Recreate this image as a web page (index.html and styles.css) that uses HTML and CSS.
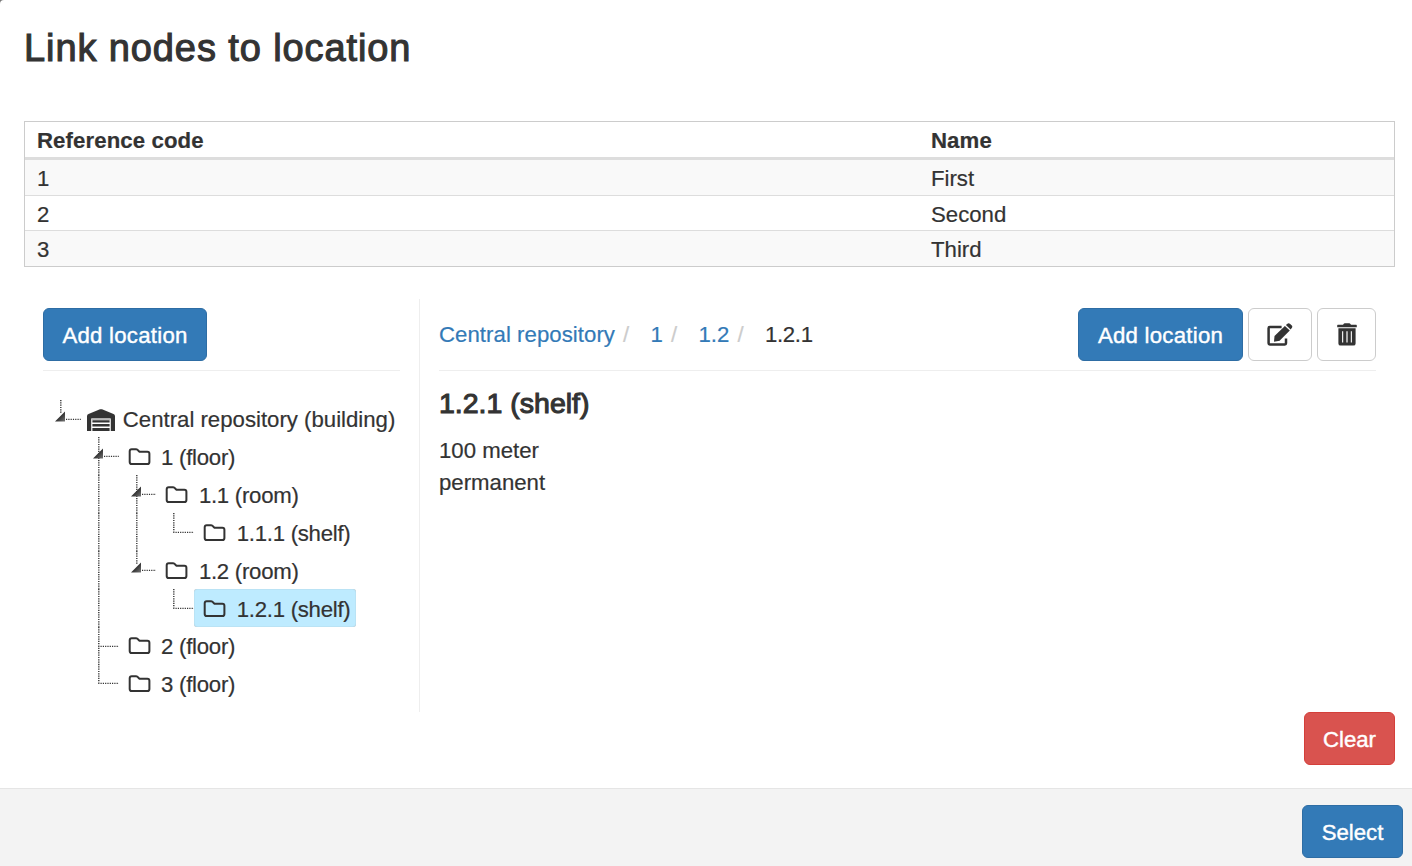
FILE: index.html
```html
<!DOCTYPE html>
<html lang="en">
<head>
<meta charset="utf-8">
<title>Link nodes to location</title>
<link rel="stylesheet" href="styles.css">
</head>
<body>
<svg width="0" height="0" class="defs">
  <defs>
    <linearGradient id="tri" x1="0" y1="0" x2="1" y2="1"><stop offset=".4" stop-color="#222"/><stop offset="1" stop-color="#777"/></linearGradient>
    <symbol id="i-folder" viewBox="0 0 22 18"><path d="M1.2 3.2Q1.2 1.2 3.2 1.2H7.4Q8.4 1.2 9.1 1.9L10.4 3.2Q11 3.8 12 3.8H18.9Q20.9 3.8 20.9 5.8V14Q20.9 16.1 18.9 16.1H3.2Q1.2 16.1 1.2 14Z" fill="none" stroke="#333" stroke-width="2"/></symbol>
    <symbol id="c-open"><path d="M17.8 0V13M23 19.4H38" class="dots"/><path d="M12 21.5L22 11.5V21.5Z" fill="url(#tri)"/></symbol>
    <symbol id="c-open-line"><path d="M17.8 0V38M23 19.4H38" class="dots"/><path d="M12 21.5L22 11.5V21.5Z" fill="url(#tri)"/></symbol>
    <symbol id="c-line"><path d="M17.8 0V38" class="dots"/></symbol>
    <symbol id="c-end"><path d="M17.8 0V19M17.2 19.4H38" class="dots"/></symbol>
    <symbol id="c-tee"><path d="M17.8 0V38M17.2 19.4H38" class="dots"/></symbol>
  </defs>
</svg>
<div class="modal">
  <header class="modal-header"><h1>Link nodes to location</h1></header>
  <main class="modal-body">
    <table class="nodes">
      <thead><tr><th class="code">Reference code</th><th>Name</th></tr></thead>
      <tbody>
        <tr><td>1</td><td>First</td></tr>
        <tr><td>2</td><td>Second</td></tr>
        <tr><td>3</td><td>Third</td></tr>
      </tbody>
    </table>
    <div class="panels">
      <section class="side">
        <div class="bar"><button class="btn primary">Add location</button></div>
        <div class="tree">
          <div class="row"><svg class="cell"><use href="#c-open"/></svg><a class="node root"><svg class="warehouse" viewBox="0 0 28 22"><path d="M0 22V7.2Q0 5.6 1.5 5L13 .3Q14 0 15 .3L26.5 5Q28 5.6 28 7.2V22H23.8V9.5H4.2V22Z" fill="#333"/><path d="M5.4 11.2H22.6V13.5H5.4ZM5.4 15H22.6V17.4H5.4ZM5.4 19H22.6V22H5.4Z" fill="#333"/><path d="M4.6 9.4H23.4V11H4.6Z" fill="#bbb"/></svg><span>Central repository (building)</span></a></div>
          <div class="row"><i class="cell"></i><svg class="cell"><use href="#c-open-line"/></svg><a class="node"><svg class="folder"><use href="#i-folder"/></svg><span>1 (floor)</span></a></div>
          <div class="row"><i class="cell"></i><svg class="cell"><use href="#c-line"/></svg><svg class="cell"><use href="#c-open-line"/></svg><a class="node"><svg class="folder"><use href="#i-folder"/></svg><span>1.1 (room)</span></a></div>
          <div class="row"><i class="cell"></i><svg class="cell"><use href="#c-line"/></svg><svg class="cell"><use href="#c-line"/></svg><svg class="cell"><use href="#c-end"/></svg><a class="node"><svg class="folder"><use href="#i-folder"/></svg><span>1.1.1 (shelf)</span></a></div>
          <div class="row"><i class="cell"></i><svg class="cell"><use href="#c-line"/></svg><svg class="cell"><use href="#c-open"/></svg><a class="node"><svg class="folder"><use href="#i-folder"/></svg><span>1.2 (room)</span></a></div>
          <div class="row"><i class="cell"></i><svg class="cell"><use href="#c-line"/></svg><i class="cell"></i><svg class="cell"><use href="#c-end"/></svg><a class="node selected"><svg class="folder"><use href="#i-folder"/></svg><span>1.2.1 (shelf)</span></a></div>
          <div class="row"><i class="cell"></i><svg class="cell"><use href="#c-tee"/></svg><a class="node"><svg class="folder"><use href="#i-folder"/></svg><span>2 (floor)</span></a></div>
          <div class="row"><i class="cell"></i><svg class="cell"><use href="#c-end"/></svg><a class="node"><svg class="folder"><use href="#i-folder"/></svg><span>3 (floor)</span></a></div>
        </div>
      </section>
      <section class="detail">
        <div class="bar">
          <nav class="crumbs"><a>Central repository</a><i>/</i><a>1</a><i>/</i><a>1.2</a><i>/</i><span class="current">1.2.1</span></nav>
          <div class="actions">
            <button class="btn primary wide">Add location</button>
            <button class="btn plain edit" aria-label="Edit"><svg width="26" height="24" viewBox="0 0 26 24"><path d="M14.6 4H2.8Q1.6 4 1.6 5.2V20.3Q1.6 21.5 2.8 21.5H17.8Q19 21.5 19 20.3V15.6" fill="none" stroke="#333" stroke-width="2.5"/><path d="M7 18.8L7.5 13L17.9 2.9L22.8 7.6L12.6 17.8Z" fill="#333"/><path d="M18.9 2L20.4 .7Q21.6 -.2 22.9 .7L24.8 2.6Q25.8 3.8 24.8 5L23.6 6.5Z" fill="#333"/></svg></button>
            <button class="btn plain trash" aria-label="Delete"><svg width="20" height="24" viewBox="0 0 20 24"><path d="M6 1.8L7 .6Q7.3 .3 7.8 .3H12.2Q12.7 .3 13 .6L14 1.8H19.2Q19.8 1.8 19.8 2.4V4.3H.2V2.4Q.2 1.8 .8 1.8Z" fill="#333"/><path fill-rule="evenodd" d="M1.4 5.2H18.6V20.4Q18.6 22.6 16.4 22.6H3.6Q1.4 22.6 1.4 20.4ZM5.1 8.2V19.4H6.2V8.2ZM9.4 8.2V19.4H10.6V8.2ZM13.8 8.2V19.4H14.9V8.2Z" fill="#333"/></svg></button>
          </div>
        </div>
        <h2>1.2.1 (shelf)</h2>
        <p class="l1">100 meter</p>
        <p>permanent</p>
      </section>
    </div>
    <div class="clear-row"><button class="btn danger">Clear</button></div>
  </main>
  <footer class="modal-footer"><button class="btn primary select">Select</button></footer>
</div>
</body>
</html>
```
FILE: styles.css
```css
* { box-sizing: border-box; }
body { margin: 0; background: #777; color: #333; font: 22.2px/32px "Helvetica Neue", "Liberation Sans", Arial, sans-serif; -webkit-text-stroke: .2px; }
.defs { position: absolute; }
.modal { height: 866px; background: #fff; border-top-left-radius: 4px; display: flex; flex-direction: column; overflow: hidden; }
.modal-header { padding: 26px 24px 0; height: 121px; }
h1 { margin: 0; font-size: 38px; line-height: 44px; font-weight: 400; letter-spacing: .9px; -webkit-text-stroke: 1.1px #333; white-space: nowrap; }
.modal-body { flex: 1; padding: 0 17px 0 24px; }
.nodes { width: 1371px; border: 1px solid #ccc; border-spacing: 0; table-layout: fixed; }
.nodes th, .nodes td { padding: 2px 12px 0; height: 36px; line-height: 32px; text-align: left; border-bottom: 1px solid #ddd; }
.nodes th { height: 38px; line-height: 33px; border-bottom-width: 3px; letter-spacing: .1px; }
.nodes tbody tr:nth-child(2) td { height: 35px; padding-top: 3px; line-height: 31px; }
.nodes tbody tr:last-child td { height: 35px; border-bottom: 0; }
.nodes tbody tr:nth-child(odd) { background: #f9f9f9; }
.code { width: 894px; }
.panels { display: flex; margin-top: 32px; height: 413px; }
.side { width: 396px; padding: 0 19px; border-right: 1px solid #eee; }
.detail { flex: 1; padding: 0 19px; }
.bar { height: 72px; padding-top: 9px; display: flex; justify-content: space-between; border-bottom: 1px solid #eee; }
.btn { height: 53px; padding: 2px 0 0; border: 1px solid; border-radius: 6px; font: inherit; letter-spacing: .25px; display: flex; align-items: center; justify-content: center; -webkit-text-stroke: .4px; }
.primary { width: 164px; color: #fff; background: #337ab7; border-color: #2e6da4; }
.danger { width: 91px; letter-spacing: 0; color: #fff; background: #d9534f; border-color: #d43f3a; }
.plain { background: #fff; border-color: #ccc; padding: 0; }
.wide { width: 165px; }
.edit { width: 64px; }
.trash { width: 59px; }
.select { width: 101px; letter-spacing: 0; }
.actions { display: flex; gap: 5px; }
.tree { padding-top: 28.5px; }
.row { display: flex; height: 37.85px; }
.cell { width: 37.8px; height: 37.85px; flex: none; }
.dots { fill: none; stroke: #333; stroke-width: 1.4; stroke-dasharray: 1.2 1.1; }
.node { display: flex; align-items: center; gap: 10.5px; padding: 4px 6px 0 9px; white-space: nowrap; letter-spacing: -.26px; }
.root { padding-left: 6px; gap: 8px; letter-spacing: 0; }
.folder { width: 23px; height: 18px; margin-top: -2px; flex: none; }
.warehouse { width: 28px; height: 22px; margin-top: -1px; flex: none; }
.selected { background: #beebff; border-radius: 3px; box-shadow: inset 0 0 1px #999; }
.crumbs { display: flex; padding-top: 11px; letter-spacing: .05px; }
.crumbs a { color: #337ab7; }
.crumbs i { font-style: normal; color: #ccc; width: 35.5px; padding-left: 8px; }
.current { letter-spacing: -.3px; }
h2 { margin: 15px 0 0; font-size: 28.5px; line-height: 34px; font-weight: 400; -webkit-text-stroke: 1.1px #333; }
p { margin: 0; }
.l1 { margin-top: 15px; }
.clear-row { display: flex; justify-content: flex-end; }
.modal-footer { height: 78px; background: #f3f3f3; border-top: 1px solid #e5e5e5; padding: 16px 9px 0; display: flex; justify-content: flex-end; }
```
